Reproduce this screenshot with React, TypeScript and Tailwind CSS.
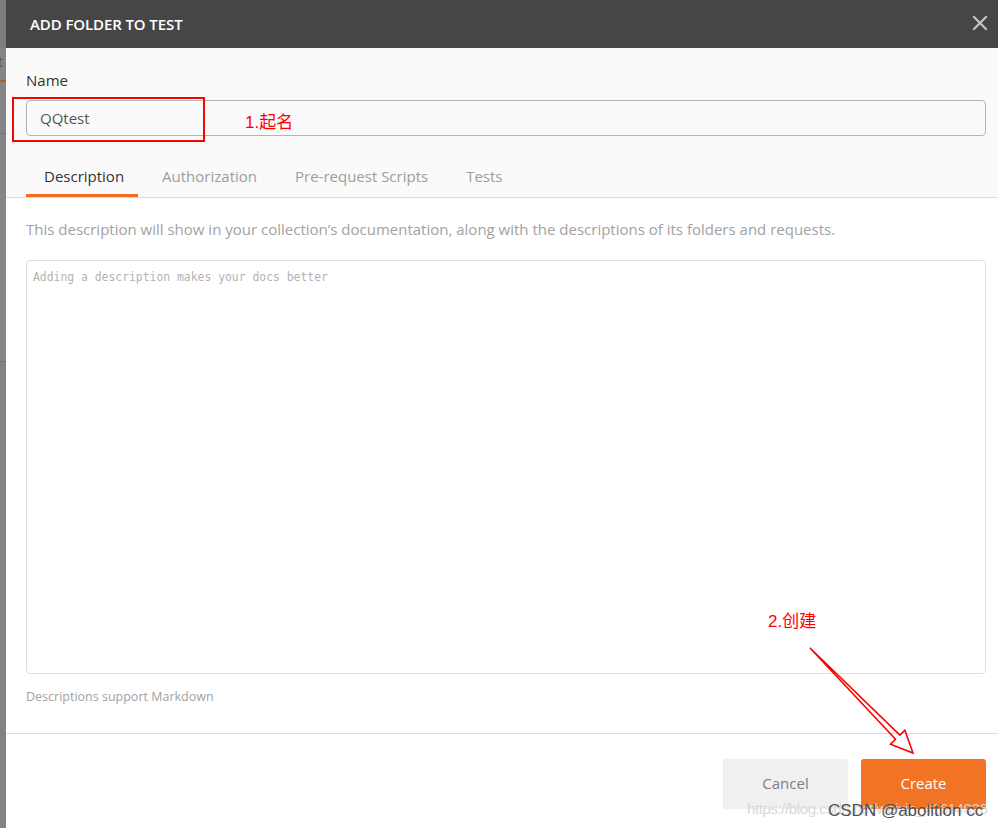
import React from "react";

const sans = { fontFamily: '"Open Sans", "Noto Sans", sans-serif' };

export default function App() {
  return (
    <div className="relative flex h-[828px] w-[998px] overflow-hidden bg-white" style={sans}>
      {/* background strip on the left */}
      <div className="relative flex w-[6px] flex-col bg-[#858585]">
        <div className="h-[48px] bg-[#7c7c7c]" />
        <div className="h-[34px] border-b-2 border-[#a0633a] text-[14px] leading-[28px] text-[#555]">
          <span className="-ml-[2px]">t</span>
        </div>
        <div className="h-[52px] border-b border-[#727272]" />
        <div className="h-[228px] border-b border-[#727272]" />
        <div className="flex-1 bg-[#838383]" />
      </div>

      {/* modal */}
      <div className="flex flex-1 flex-col">
        <div className="flex h-[48px] items-center justify-between bg-[#464646] pl-[24px] pr-[10px]">
          <span className="text-[15px] font-semibold tracking-[-0.1px] text-white">ADD FOLDER TO TEST</span>
          <svg width="16" height="16" viewBox="0 0 16 16" className="mb-[2px]">
            <path d="M2 2 L14 14 M14 2 L2 14" stroke="#c4c4c4" strokeWidth="2.2" strokeLinecap="square" />
          </svg>
        </div>

        <div className="flex flex-col bg-[#fafafa] pl-[20px] pr-[12px] pt-[22px]">
          <div className="text-[15px] leading-[20px] text-[#333]">Name</div>
          <div className="mt-[10px] flex h-[36px] items-center rounded-[4px] border border-[#b4b4b4] bg-[#fafafa] pl-[13px] text-[15px] text-[#555]">
            QQtest
          </div>
          <div className="mt-[24px] flex h-[37px] text-[15px]">
            <div className="flex items-center border-b-[3px] border-[#f26b21] pb-[1px] pl-[18px] pr-[14px] text-[#333]">Description</div>
            <div className="flex items-center border-b-[3px] border-transparent pb-[1px] pl-[24px] pr-[19px] text-[#9d9d9d]">Authorization</div>
            <div className="flex items-center border-b-[3px] border-transparent pb-[1px] px-[19px] text-[#9d9d9d]">Pre-request Scripts</div>
            <div className="flex items-center border-b-[3px] border-transparent pb-[1px] px-[19px] text-[#9d9d9d]">Tests</div>
          </div>
        </div>
        <div className="h-px bg-[#dcdcdc]" />

        <div className="flex flex-col pl-[20px] pr-[12px] pt-[21px]">
          <div className="text-[15px] leading-[20px] text-[#a2a2a2]">
            This description will show in your collection’s documentation, along with the descriptions of its folders and requests.
          </div>
          <div className="mt-[21px] h-[414px] rounded-[4px] border border-[#dedede] bg-white px-[6px] pt-[8px]">
            <div className="text-[12px] leading-[16px] text-[#b3b3b3]" style={{ fontFamily: '"DejaVu Sans Mono", monospace', fontSize: "11.4px" }}>
              Adding a description makes your docs better
            </div>
          </div>
          <div className="mt-[15px] text-[12.5px] leading-[16px] text-[#a2a2a2]">Descriptions support Markdown</div>
        </div>
        <div className="mt-[28px] h-px bg-[#dcdcdc]" />

        <div className="flex justify-end gap-[13px] pr-[12px] pt-[25px]">
          <div className="flex h-[50px] w-[125px] items-center justify-center rounded-[3px] bg-[#f0f0f0] pb-[1px] text-[15px] text-[#808080]">Cancel</div>
          <div className="flex h-[50px] w-[125px] items-center justify-center rounded-[3px] bg-[#f37325] pb-[1px] text-[15px] text-white">Create</div>
        </div>
      </div>

      {/* annotations */}
      <div className="absolute left-[12px] top-[97px] h-[45px] w-[193px] border-2 border-[#ff0000]" />
      <div className="absolute left-[245px] top-[111px] text-[17px] leading-[24px] text-[#ff0000]" style={{ fontFamily: '"Liberation Sans", "Noto Sans CJK SC", sans-serif' }}>
        1.起名
      </div>
      <div className="absolute left-[768px] top-[610px] text-[17px] leading-[24px] text-[#ff0000]" style={{ fontFamily: '"Liberation Sans", "Noto Sans CJK SC", sans-serif' }}>
        2.创建
      </div>
      <svg className="absolute left-0 top-0" width="998" height="828" viewBox="0 0 998 828" style={{ pointerEvents: "none" }}>
        <polygon
          points="810,648 895.5,739.3 890.5,744.2 913,753 904.9,730.2 899.9,735.1"
          fill="none"
          stroke="#ff0000"
          strokeWidth="1.6"
          strokeLinejoin="miter"
        />
      </svg>
      <div className="absolute left-[747px] top-[799px] text-[15px] leading-[20px] tracking-[-0.4px] text-[#d8d8d8]" style={{ fontFamily: '"Liberation Sans", sans-serif' }}>
        https://blog.csdn.net/weixin_41614026
      </div>
      <div className="absolute left-[828px] top-[800px] text-[17px] leading-[22px] text-[#505050]" style={{ fontFamily: '"Liberation Sans", sans-serif' }}>
        CSDN @abolition cc
      </div>
    </div>
  );
}
